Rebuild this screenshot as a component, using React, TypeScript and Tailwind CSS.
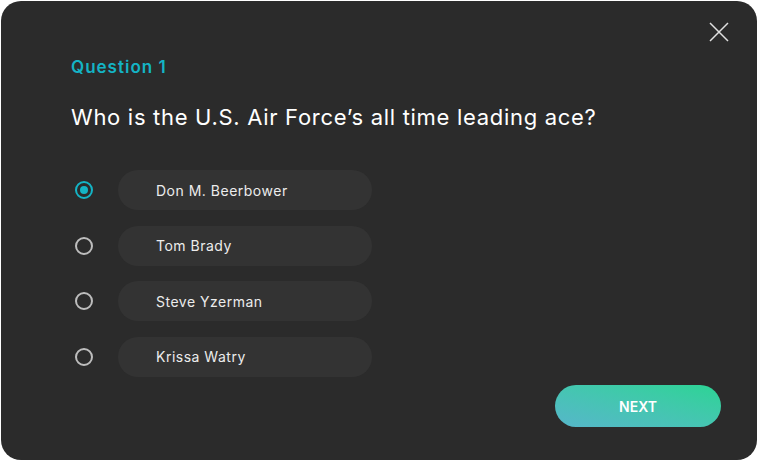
import React, { useState } from 'react';

const options = ['Don M. Beerbower', 'Tom Brady', 'Steve Yzerman', 'Krissa Watry'];

const App = () => {
  const [selected, setSelected] = useState(0);

  return (
    <div className="w-[758px] h-[461px] bg-white p-px" style={{ fontFamily: 'Inter, "Noto Sans", sans-serif' }}>
      <div className="relative w-full h-full bg-[#2b2b2b] rounded-[20px] pl-[69px] pt-[55px]">
        <button className="absolute top-[21px] right-[28px] text-[#e0e0e0]">
          <svg width="20" height="20" viewBox="0 0 20 20" fill="none" stroke="currentColor" strokeWidth="1.5">
            <path d="M1 1L19 19M19 1L1 19" />
          </svg>
        </button>

        <div className="pl-px text-[17px] font-semibold tracking-[1px] text-[#14b4c5] leading-[22px]">Question 1</div>
        <h1 className="pl-px mt-[25px] text-[22px] tracking-[0.7px] text-white leading-[28px]">
          Who is the U.S. Air Force’s all time leading ace?
        </h1>

        <div className="mt-[39px] flex flex-col gap-[15.5px]">
          {options.map((opt, i) => (
            <div key={i} className="flex items-center cursor-pointer" onClick={() => setSelected(i)}>
              <div className="w-[48px] flex items-center">
                <div
                  className={`w-[18px] h-[18px] ml-[5px] rounded-full border-2 flex items-center justify-center ${
                    selected === i ? 'border-[#14b4c5]' : 'border-[#bdbdbd]'
                  }`}
                >
                  {selected === i && <div className="w-[8px] h-[8px] rounded-full bg-[#14b4c5]" />}
                </div>
              </div>
              <div className="w-[254px] h-[40px] rounded-full bg-[#333333] flex items-center pl-[38px] text-[14px] tracking-[0.5px] text-[#ececec]">
                {opt}
              </div>
            </div>
          ))}
        </div>

        <button className="absolute right-[36px] bottom-[33px] w-[166px] h-[42px] rounded-full bg-gradient-to-tr from-[#56b6ca] to-[#2bd494] text-white text-[14px] font-semibold">
          NEXT
        </button>
      </div>
    </div>
  );
};

export default App;
